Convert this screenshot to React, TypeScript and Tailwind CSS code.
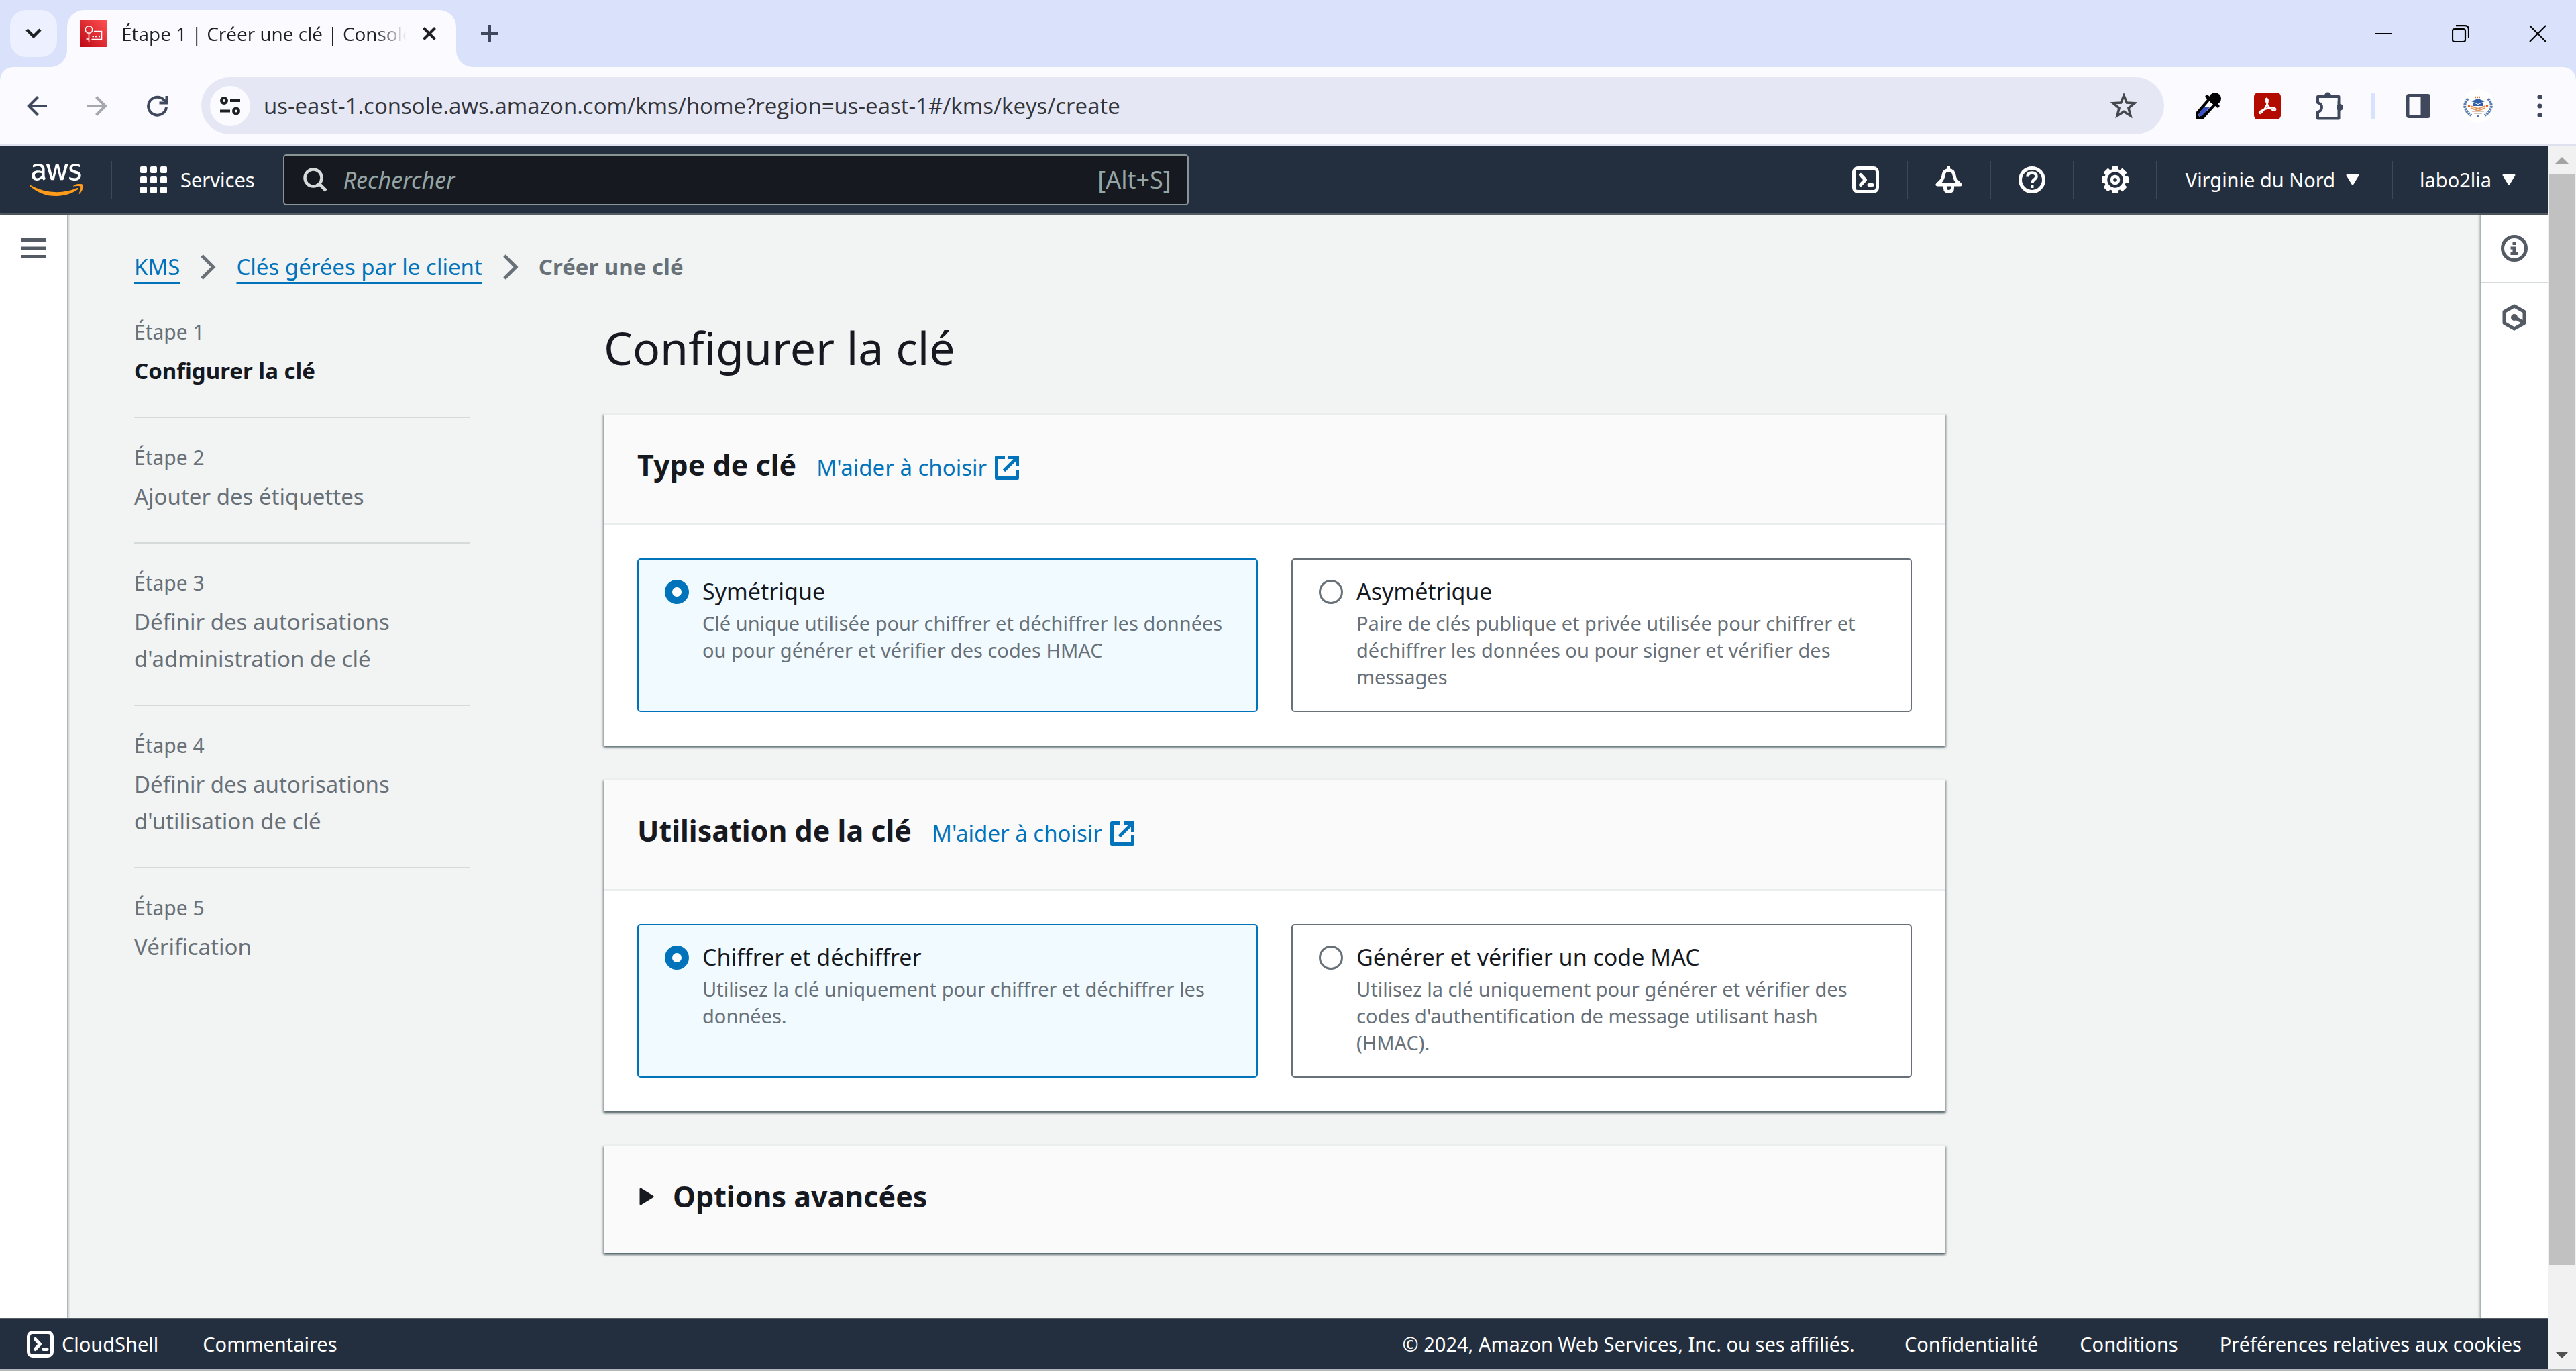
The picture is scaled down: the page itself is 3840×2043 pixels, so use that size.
import React, { useState } from "react";
import type { ReactNode } from "react";
import { FaAws } from "react-icons/fa";

const steps = [
  { label: "Étape 1", title: "Configurer la clé" },
  { label: "Étape 2", title: "Ajouter des étiquettes" },
  { label: "Étape 3", title: "Définir des autorisations d'administration de clé" },
  { label: "Étape 4", title: "Définir des autorisations d'utilisation de clé" },
  { label: "Étape 5", title: "Vérification" },
];

const keyTypes = [
  {
    value: "symmetric",
    label: "Symétrique",
    text: "Clé unique utilisée pour chiffrer et déchiffrer les données ou pour générer et vérifier des codes HMAC",
  },
  {
    value: "asymmetric",
    label: "Asymétrique",
    text: "Paire de clés publique et privée utilisée pour chiffrer et déchiffrer les données ou pour signer et vérifier des messages",
  },
];

const keyUsages = [
  {
    value: "encrypt",
    label: "Chiffrer et déchiffrer",
    text: "Utilisez la clé uniquement pour chiffrer et déchiffrer les données.",
  },
  {
    value: "mac",
    label: "Générer et vérifier un code MAC",
    text: "Utilisez la clé uniquement pour générer et vérifier des codes d'authentification de message utilisant hash (HMAC).",
  },
];

function ShellIcon() {
  return (
    <svg viewBox="0 0 40 40" className="size-10" fill="none" stroke="currentColor" strokeWidth="5" aria-hidden="true">
      <rect x="2.5" y="2.5" width="35" height="35" rx="6" />
      <path d="M12.500 12.500 L19.500 20 L12.500 27.500" strokeLinecap="round" strokeLinejoin="round" />
      <path d="M25 27.500 H30" strokeLinecap="round" />
    </svg>
  );
}

function BellIcon() {
  return (
    <svg viewBox="0 0 40 40" className="size-10" fill="none" stroke="currentColor" strokeWidth="5" strokeLinejoin="round" aria-hidden="true">
      <path d="M20 5.500 C15.500 5.500 12.500 8.500 12 13 C11.500 19 9 21 3 27 H37 C31 21 28.500 19 28 13 C27.500 8.500 24.500 5.500 20 5.500Z" />
      <path d="M20 0 V6" strokeWidth="4" />
      <path d="M14.500 28 V32 C14.500 35.500 16.500 37.500 20 37.500 C23.500 37.500 25.500 35.500 25.500 32 V28" />
    </svg>
  );
}

function HelpIcon() {
  return (
    <svg viewBox="0 0 40 40" className="size-10" fill="none" stroke="currentColor" aria-hidden="true">
      <circle cx="20" cy="20" r="17.5" strokeWidth="5" />
      <path d="M13.500 15.500 C13.500 11.500 16 9.500 20 9.500 C24 9.500 26.500 11.500 26.500 15 C26.500 19.500 20.200 19 20.200 25" strokeWidth="4.5" />
      <rect x="18" y="27.500" width="4.5" height="4.5" fill="currentColor" stroke="none" />
    </svg>
  );
}

function GearIcon() {
  const teeth = [0, 45, 90, 135, 180, 225, 270, 315];
  return (
    <svg viewBox="0 0 40 40" className="size-10" fill="none" stroke="currentColor" aria-hidden="true">
      <circle cx="20" cy="20" r="14" strokeWidth="4.5" />
      {teeth.map((a) => (
        <rect key={a} x="15" y="0" width="10" height="7" rx="1.500" fill="currentColor" stroke="none" transform={`rotate(${a} 20 20)`} />
      ))}
      <circle cx="20" cy="20" r="5" strokeWidth="4.5" />
    </svg>
  );
}

function InfoIcon() {
  return (
    <svg viewBox="0 0 40 40" className="size-10" fill="none" stroke="currentColor" strokeWidth="5" aria-hidden="true">
      <circle cx="20" cy="20" r="17.5" />
      <path d="M17.500 10 H22.500 V15 H17.500Z M14.500 17.500 H22.500 V26 H25 V30 H14.500 V26 H17.500 V21.500 H14.500Z" fill="currentColor" stroke="none" />
    </svg>
  );
}

function HexIcon() {
  return (
    <svg viewBox="0 0 40 40" className="size-10" fill="none" stroke="currentColor" strokeWidth="5" aria-hidden="true">
      <path d="M20 3 L35 11.500 V28.500 L20 37 L5 28.500 V11.500Z" strokeLinejoin="round" />
      <circle cx="20" cy="20" r="5" fill="currentColor" stroke="none" />
      <path d="M20 20 L34 27.500" />
    </svg>
  );
}

function ExternalIcon() {
  return (
    <svg viewBox="0 0 36 36" className="size-9 shrink-0" fill="none" stroke="currentColor" strokeWidth="5" aria-hidden="true">
      <path d="M15 2.500 H2.500 V33.500 H33.500 V21" strokeLinejoin="round" />
      <path d="M20 2.500 H33.500 V16" />
      <path d="M33 3 L13.500 22.500" />
    </svg>
  );
}

function Caret() {
  return (
    <svg viewBox="0 0 20 16" className="h-4 w-5" aria-hidden="true">
      <path d="M1.500 1 H18.500 L10 15Z" fill="currentColor" stroke="currentColor" strokeWidth="2" strokeLinejoin="round" />
    </svg>
  );
}

function Chevron() {
  return (
    <svg viewBox="0 0 24 40" className="h-10 w-6" fill="none" stroke="#687078" strokeWidth="5" aria-hidden="true">
      <path d="M3 3 L20 20 L3 37" />
    </svg>
  );
}

function IconButton({ label, className = "", children }: { label: string; className?: string; children: ReactNode }) {
  return (
    <button type="button" aria-label={label} className={`flex shrink-0 items-center justify-center ${className}`}>
      {children}
    </button>
  );
}

function TabStrip() {
  return (
    <div className="flex h-[100px] items-start bg-[#dae1fa] pt-[15px]">
      <IconButton label="Rechercher dans les onglets" className="mr-[15px] ml-[15px] size-[70px] rounded-[24px] bg-[#ecf0ff]">
        <svg viewBox="0 0 24 16" className="h-4 w-6" fill="none" stroke="#1f2024" strokeWidth="4.5" aria-hidden="true">
          <path d="M2 2 L12 12 L22 2" />
        </svg>
      </IconButton>
      <div className="relative flex h-[85px] w-[580px] items-center rounded-t-[25px] bg-[#fafaff] pr-[25px] pb-[15px] pl-5">
        <svg viewBox="0 0 25 25" className="absolute bottom-0 -left-[25px] size-[25px]" aria-hidden="true">
          <path d="M25 0 V25 H0 A25 25 0 0 0 25 0Z" fill="#fafaff" />
        </svg>
        <svg viewBox="0 0 25 25" className="absolute -right-[25px] bottom-0 size-[25px]" aria-hidden="true">
          <path d="M0 0 V25 H25 A25 25 0 0 1 0 0Z" fill="#fafaff" />
        </svg>
        <svg viewBox="0 0 40 40" className="size-10 shrink-0" fill="none" stroke="#fff" strokeWidth="1.6" aria-hidden="true">
          <defs>
            <linearGradient id="favicon" x1="0" y1="1" x2="1" y2="0">
              <stop offset="0" stopColor="#bd0816" />
              <stop offset="1" stopColor="#ff5252" />
            </linearGradient>
          </defs>
          <rect width="40" height="40" fill="url(#favicon)" stroke="none" />
          <circle cx="12.500" cy="14" r="5.300" />
          <path d="M12.500 19.500 V33 M8.500 28 H12.500 M20 16.500 H31.500 V28.500 H16.500 M17.500 24.500 H20 M21.500 24.500 H24.500 M28 24.500 H29" />
        </svg>
        <div className="ml-[21px] shrink-0 whitespace-nowrap text-[28px] leading-[40px] text-[#1f2024] [mask-image:linear-gradient(90deg,#000_380px,transparent_425px)]">
          Étape 1 | Créer une clé | Console
        </div>
        <IconButton label="Fermer l'onglet" className="ml-auto size-[30px]">
          <svg viewBox="0 0 20 20" className="size-5" stroke="#1f2024" strokeWidth="4" aria-hidden="true">
            <path d="M1.500 1.500 L18.500 18.500 M18.500 1.500 L1.500 18.500" />
          </svg>
        </IconButton>
      </div>
      <IconButton label="Nouvel onglet" className="ml-[15px] size-[70px]">
        <svg viewBox="0 0 26 26" className="size-[26px]" stroke="#3f485c" strokeWidth="4" aria-hidden="true">
          <path d="M13 0 V26 M0 13 H26" />
        </svg>
      </IconButton>
      <div className="ml-auto flex h-[70px]">
        <IconButton label="Réduire" className="w-[115px]">
          <svg viewBox="0 0 26 26" className="size-[26px]" stroke="#000" strokeWidth="2" aria-hidden="true">
            <path d="M1 13 H25" />
          </svg>
        </IconButton>
        <IconButton label="Restaurer" className="w-[115px]">
          <svg viewBox="0 0 26 26" className="size-[26px]" fill="none" stroke="#000" strokeWidth="2.2" aria-hidden="true">
            <rect x="1" y="6" width="19" height="19" rx="3" />
            <path d="M6 1.200 H19 C23 1.200 25 3.500 25 7 V20" />
          </svg>
        </IconButton>
        <IconButton label="Fermer" className="w-[115px]">
          <svg viewBox="0 0 26 26" className="size-[26px]" stroke="#000" strokeWidth="2" aria-hidden="true">
            <path d="M1 1 L25 25 M25 1 L1 25" />
          </svg>
        </IconButton>
      </div>
    </div>
  );
}

function Toolbar() {
  return (
    <div className="bg-[#dae1fa]">
      <div className="flex h-[118px] items-center rounded-t-[20px] border-b-[3px] border-[#dfe2ee] bg-[#fafaff] pr-[34px] pl-5">
        <IconButton label="Retour" className="size-[70px]">
          <svg viewBox="0 0 30 30" className="size-[30px]" fill="none" stroke="#3f485c" strokeWidth="4" aria-hidden="true">
            <path d="M30 15 H3 M16.500 1.500 L3 15 L16.500 28.500" />
          </svg>
        </IconButton>
        <IconButton label="Avancer" className="ml-5 size-[70px]">
          <svg viewBox="0 0 30 30" className="size-[30px]" fill="none" stroke="#a6a8ad" strokeWidth="4" aria-hidden="true">
            <path d="M0 15 H27 M13.500 1.500 L27 15 L13.500 28.500" />
          </svg>
        </IconButton>
        <IconButton label="Actualiser" className="ml-5 size-[70px]">
          <svg viewBox="0 0 32 32" className="size-8" fill="none" stroke="#3f485c" strokeWidth="4" aria-hidden="true">
            <path d="M29 18 A13.500 13.500 0 1 1 26 7.500 L29 11" />
            <path d="M29.500 1 V11.500 H18.500" />
          </svg>
        </IconButton>
        <div className="ml-[30px] flex h-[85px] flex-1 items-center rounded-full bg-[#e5e8f4] pr-10 pl-[13px]">
          <IconButton label="Informations sur le site" className="size-[60px] rounded-full bg-[#fafaff]">
            <svg viewBox="0 0 30 28" className="h-7 w-[30px]" fill="none" stroke="#1f2024" strokeWidth="4" aria-hidden="true">
              <circle cx="6" cy="6" r="4" />
              <path d="M15 6 H30 M0 21.500 H15" />
              <circle cx="24" cy="21.500" r="4" />
            </svg>
          </IconButton>
          <input
            aria-label="Barre d'adresse"
            defaultValue="us-east-1.console.aws.amazon.com/kms/home?region=us-east-1#/kms/keys/create"
            className="ml-5 min-w-0 flex-1 bg-transparent text-[33px] leading-[50px] text-[#34353a] outline-none"
          />
          <IconButton label="Ajouter aux favoris">
            <svg viewBox="0 0 40 40" className="size-10" fill="none" stroke="#46484d" strokeWidth="3.600" aria-hidden="true">
              <path d="M20 4.500 L24.300 15 L36 15.800 L27 23.200 L29.900 34.500 L20 28.400 L10.100 34.500 L13 23.200 L4 15.800 L15.700 15Z" />
            </svg>
          </IconButton>
        </div>
        <IconButton label="Pipette" className="ml-[46px]">
          <svg viewBox="0 0 40 40" className="size-10" aria-hidden="true">
            <path d="M1 39 L1 30 L20 8 L32 18 L13 39Z" fill="#000" />
            <path d="M22 12 L27.500 17 L18 27 L7 36 L5 34 L6 31Z" fill="#fff" />
            <path d="M14 21 H23 L10 35 L5 35 L6 31Z" fill="#3b50c0" />
            <circle cx="30" cy="9" r="9" fill="#000" />
            <path d="M18 6 L34 20" stroke="#000" strokeWidth="5" strokeLinecap="round" />
          </svg>
        </IconButton>
        <IconButton label="Adobe Acrobat" className="ml-12">
          <svg viewBox="0 0 40 40" className="size-10" fill="none" aria-hidden="true">
            <rect width="40" height="40" rx="6" fill="#b30b00" />
            <path d="M19.500 9 C23 11 19 22 11 30 C8.500 32.500 6.500 29.500 10 27.500 C16 24 27 21 31.500 23.500 C34 26 30 27.500 27 25.500 C21 22 17 13 18 9.500 C18.500 8.500 19 8.500 19.500 9Z" stroke="#fff" strokeWidth="2.400" strokeLinejoin="round" />
          </svg>
        </IconButton>
        <IconButton label="Extensions" className="ml-[52px]">
          <svg viewBox="0 0 42 42" className="size-[42px]" fill="none" stroke="#3f485c" strokeWidth="4" strokeLinejoin="round" aria-hidden="true">
            <path d="M3 7 H34.500 V39.500 H3 V30 C11 28 11 18 3 16Z" />
            <circle cx="18" cy="5.500" r="5" fill="#3f485c" stroke="none" />
            <circle cx="36" cy="23" r="5" fill="#3f485c" stroke="none" />
            <rect x="5" y="9" width="27.500" height="4" fill="#fafaff" stroke="none" />
          </svg>
        </IconButton>
        <div className="ml-[41px] h-10 w-[5px] rounded-full bg-[#d5e3fc]" />
        <IconButton label="Panneau latéral" className="ml-[47px]">
          <svg viewBox="0 0 36 36" className="size-9" aria-hidden="true">
            <path fillRule="evenodd" d="M4 0 H32 A4 4 0 0 1 36 4 V32 A4 4 0 0 1 32 36 H4 A4 4 0 0 1 0 32 V4 A4 4 0 0 1 4 0Z M4.500 4.500 V31.500 H21.500 V4.500Z" fill="#3f485c" />
          </svg>
        </IconButton>
        <IconButton label="Profil" className="ml-[46px] size-[50px] rounded-full bg-white">
          <svg viewBox="0 0 44 44" className="size-11" fill="none" aria-hidden="true">
            <path d="M7 11 C0 19 0 28 12 36 M37 11 C44 19 44 28 32 36" stroke="#5b7db1" strokeWidth="4" strokeDasharray="3 1" />
            <path d="M17 9 H27" stroke="#e07b35" strokeWidth="2.500" strokeDasharray="2 1" />
            <path d="M22 11 L32 15 L22 19 L12 15Z M15 17 V22 H29 V17 L22 20Z" fill="#2f5fa8" />
            <path d="M11 22 L22 26 L33 22 M11 25 L22 29 L33 25" stroke="#e39a62" strokeWidth="2" />
            <circle cx="8.500" cy="22" r="1.800" fill="#e5642a" />
            <circle cx="35.500" cy="22" r="1.800" fill="#e5642a" />
            <path d="M13 30 H31 M16 33 H28" stroke="#c9b5ae" strokeWidth="1.500" />
            <path d="M20 37 H24" stroke="#4a7cc0" strokeWidth="3" />
          </svg>
        </IconButton>
        <IconButton label="Menu de Chrome" className="ml-[47px] w-10">
          <svg viewBox="0 0 8 36" className="h-9 w-2" fill="#3f485c" aria-hidden="true">
            <circle cx="4" cy="4.500" r="3.600" />
            <circle cx="4" cy="18" r="3.600" />
            <circle cx="4" cy="31.500" r="3.600" />
          </svg>
        </IconButton>
      </div>
    </div>
  );
}

function Separator() {
  return <div className="h-14 w-0.5 shrink-0 bg-[#414750]" />;
}

function ConsoleHeader() {
  return (
    <header className="flex h-[102px] items-center border-b-2 border-[#545b64] bg-[#232f3e] text-[29px] leading-[50px] text-white">
      <a href="#accueil" aria-label="AWS" className="ml-11">
        <svg width="0" height="0" className="absolute" aria-hidden="true">
          <linearGradient id="aws" x1="0" y1="0" x2="0" y2="1">
            <stop offset="0.57" stopColor="#fff" />
            <stop offset="0.57" stopColor="#ff9b1a" />
          </linearGradient>
        </svg>
        <FaAws className="h-16 w-20 [&>path]:fill-[url(#aws)]" />
      </a>
      <div className="ml-[41px]">
        <Separator />
      </div>
      <button type="button" className="ml-[42px] flex items-center gap-5">
        <svg viewBox="0 0 40 40" className="size-10" fill="currentColor" aria-hidden="true">
          {[0, 15, 30].map((y) => [0, 15, 30].map((x) => <rect key={`${x}-${y}`} x={x} y={y} width="10" height="10" rx="2" />))}
        </svg>
        Services
      </button>
      <label className="ml-[42px] flex h-[76px] w-full max-w-[1350px] items-center rounded-[5px] border-2 border-[#879596] bg-[#16191f] pr-6 pl-7">
        <svg viewBox="0 0 36 36" className="size-9 shrink-0" fill="none" stroke="#d5dbdb" strokeWidth="4.500" aria-hidden="true">
          <circle cx="15" cy="15" r="12.500" />
          <path d="M24 24 L34 34" strokeWidth="5" />
        </svg>
        <input
          type="search"
          aria-label="Rechercher"
          placeholder="Rechercher"
          className="ml-6 min-w-0 flex-1 bg-transparent text-[34px] text-white outline-none placeholder:text-[#95a5a6] placeholder:italic"
        />
        <span className="text-[36px] text-[#95a5a6]">[Alt+S]</span>
      </label>
      <nav aria-label="Compte" className="ml-auto flex items-center whitespace-nowrap">
        <IconButton label="CloudShell" className="h-[100px] w-[122px]"><ShellIcon /></IconButton>
        <Separator />
        <IconButton label="Notifications" className="h-[100px] w-[122px]"><BellIcon /></IconButton>
        <Separator />
        <IconButton label="Aide" className="h-[100px] w-[122px]"><HelpIcon /></IconButton>
        <Separator />
        <IconButton label="Paramètres" className="h-[100px] w-[122px]"><GearIcon /></IconButton>
        <Separator />
        <button type="button" className="flex items-center gap-4 pr-12 pl-[42px]">
          Virginie du Nord <Caret />
        </button>
        <Separator />
        <button type="button" className="flex items-center gap-4 pr-12 pl-10">
          labo2lia <Caret />
        </button>
      </nav>
    </header>
  );
}

const cardShadow =
  "border-t-2 border-[#eaeded] shadow-[0_3px_3px_rgba(0,28,36,0.45),2px_2px_3px_rgba(0,28,36,0.2),-2px_2px_3px_rgba(0,28,36,0.2)]";

type Option = { value: string; label: string; text: string };

function ChoiceCard({ title, name, options }: { title: string; name: string; options: Option[] }) {
  const [selected, setSelected] = useState(options[0].value);
  return (
    <section className={`bg-white ${cardShadow}`}>
      <div className="flex items-baseline gap-[30px] border-b-2 border-[#eaeded] bg-[#fafafa] px-[50px] pt-[43px] pb-[55px]">
        <h2 className="text-[43px] leading-[64px] font-bold text-[#16191f]">{title}</h2>
        <a href={`#${name}`} className="flex items-center gap-3 text-[33px] leading-[50px] text-[#0073bb]">
          M'aider à choisir
          <ExternalIcon />
        </a>
      </div>
      <div role="radiogroup" aria-label={title} className="grid grid-cols-2 gap-[50px] p-[50px]">
        {options.map((o) => (
          <label
            key={o.value}
            className="flex gap-5 rounded-[5px] border-2 border-[#687078] px-[39px] pt-[19px] pb-[30px] has-checked:border-[#0073bb] has-checked:bg-[#f1faff]"
          >
            <input
              type="radio"
              name={name}
              value={o.value}
              checked={selected === o.value}
              onChange={() => setSelected(o.value)}
              className="mt-[11px] size-9 shrink-0 appearance-none rounded-full border-3 border-[#687078] bg-white checked:border-[11px] checked:border-[#0073bb]"
            />
            <span className="min-w-0">
              <span className="block text-[34px] leading-[56px] text-[#16191f]">{o.label}</span>
              <span className="block text-[29px] leading-[40px] text-[#687078]">{o.text}</span>
            </span>
          </label>
        ))}
      </div>
    </section>
  );
}

function AdvancedOptions() {
  const [open, setOpen] = useState(false);
  return (
    <section className={`bg-[#fafafa] ${cardShadow}`}>
      <h2 className="text-[43px] leading-[64px] font-bold text-[#16191f]">
        <button
          type="button"
          aria-expanded={open}
          onClick={() => setOpen(!open)}
          className="flex w-full items-center gap-7 px-[53px] pt-[43px] pb-[52px] text-left"
        >
          <svg viewBox="0 0 22 26" className="h-[26px] w-[22px]" aria-hidden="true">
            <path d="M2 2 L20 13 L2 24Z" fill="currentColor" stroke="currentColor" strokeWidth="3" strokeLinejoin="round" />
          </svg>
          Options avancées
        </button>
      </h2>
    </section>
  );
}

function Steps() {
  return (
    <nav aria-label="Étapes" className="w-[500px] shrink-0">
      <ol className="divide-y-2 divide-[#d5dbdb]">
        {steps.map((s, i) => (
          <li key={s.label} className="pt-[34px] pb-[41px] text-[#687078] first:pt-0" aria-current={i === 0 ? "step" : undefined}>
            <div className="mb-[5px] text-[30px] leading-[50px]">{s.label}</div>
            <div className={i === 0 ? "text-[33px] leading-[55px] font-bold text-[#16191f]" : "text-[33px] leading-[55px]"}>
              {s.title}
            </div>
          </li>
        ))}
      </ol>
    </nav>
  );
}

function Breadcrumb() {
  return (
    <nav aria-label="Fil d'Ariane">
      <ol className="flex items-center gap-[30px] text-[33px] leading-[55px]">
        <li>
          <a href="#kms" className="text-[#0073bb] underline decoration-[3px] underline-offset-[10px] [text-decoration-skip-ink:none]">KMS</a>
        </li>
        <li aria-hidden="true"><Chevron /></li>
        <li>
          <a href="#cles" className="text-[#0073bb] underline decoration-[3px] underline-offset-[10px] [text-decoration-skip-ink:none]">
            Clés gérées par le client
          </a>
        </li>
        <li aria-hidden="true"><Chevron /></li>
        <li aria-current="page" className="font-bold text-[#687078]">Créer une clé</li>
      </ol>
    </nav>
  );
}

function ConsoleFooter() {
  return (
    <footer className="flex h-[76px] items-center border-t-2 border-[#545b64] bg-[#232f3e] pr-[39px] pl-10 text-[29px] leading-[50px] text-white">
      <button type="button" className="flex items-center gap-3">
        <ShellIcon />
        CloudShell
      </button>
      <button type="button" className="ml-[66px]">Commentaires</button>
      <div className="ml-auto flex gap-[62px]">
        <span className="mr-3">© 2024, Amazon Web Services, Inc. ou ses affiliés.</span>
        <a href="#confidentialite">Confidentialité</a>
        <a href="#conditions">Conditions</a>
        <a href="#cookies">Préférences relatives aux cookies</a>
      </div>
    </footer>
  );
}

function ScrollTrack() {
  return (
    <div aria-hidden="true" className="flex w-[42px] shrink-0 flex-col items-center bg-[#f1f1f1]">
      <div className="flex h-[42px] items-center">
        <svg viewBox="0 0 20 10" className="h-2.5 w-5"><path d="M10 0 L20 10 H0Z" fill="#a3a3a3" /></svg>
      </div>
      <div className="w-[38px] grow-[1625] bg-[#c1c1c1]" />
      <div className="grow-[113]" />
      <div className="flex h-[42px] items-center">
        <svg viewBox="0 0 20 10" className="h-2.5 w-5"><path d="M0 0 H20 L10 10Z" fill="#505050" /></svg>
      </div>
    </div>
  );
}

export default function App() {
  return (
    <div className="flex min-h-screen flex-col border-b-3 border-[#b4b8ba] bg-[#f2f3f3] font-['Noto_Sans',sans-serif]">
      <div className="font-['Open_Sans',sans-serif]">
        <TabStrip />
        <Toolbar />
      </div>
      <div className="flex flex-1">
        <div className="flex min-w-0 flex-1 flex-col">
          <ConsoleHeader />
          <div className="flex flex-1">
            <aside className="flex w-[101px] shrink-0 flex-col items-center border-r border-[#aab7b8] bg-white pt-[30px] shadow-[1px_0_3px_rgba(0,28,36,0.3)]">
              <IconButton label="Ouvrir la navigation" className="h-10 w-full">
                <svg viewBox="0 0 36 30" className="h-[30px] w-9" fill="#545b64" aria-hidden="true">
                  <path d="M0 0 H36 V5 H0Z M0 12.500 H36 V17.500 H0Z M0 25 H36 V30 H0Z" />
                </svg>
              </IconButton>
            </aside>
            <main className="min-w-0 flex-1 px-[99px] pt-[50px] pb-24">
              <Breadcrumb />
              <div className="mt-[45px] flex gap-[200px]">
                <Steps />
                <div className="max-w-[2000px] min-w-0 flex-1">
                  <h1 className="text-[68px] leading-[96px] text-[#16191f]">Configurer la clé</h1>
                  <div className="mt-[50px] flex flex-col gap-[50px]">
                    <ChoiceCard title="Type de clé" name="type-de-cle" options={keyTypes} />
                    <ChoiceCard title="Utilisation de la clé" name="utilisation" options={keyUsages} />
                    <AdvancedOptions />
                  </div>
                </div>
              </div>
            </main>
            <aside className="flex w-[101px] shrink-0 flex-col border-l border-[#aab7b8] bg-white text-[#545b64] shadow-[-1px_0_3px_rgba(0,28,36,0.3)]">
              <IconButton label="Informations" className="h-[102px] border-b-2 border-[#d5dbdb]"><InfoIcon /></IconButton>
              <IconButton label="Assistant" className="h-[102px]"><HexIcon /></IconButton>
            </aside>
          </div>
          <ConsoleFooter />
        </div>
        <ScrollTrack />
      </div>
    </div>
  );
}
